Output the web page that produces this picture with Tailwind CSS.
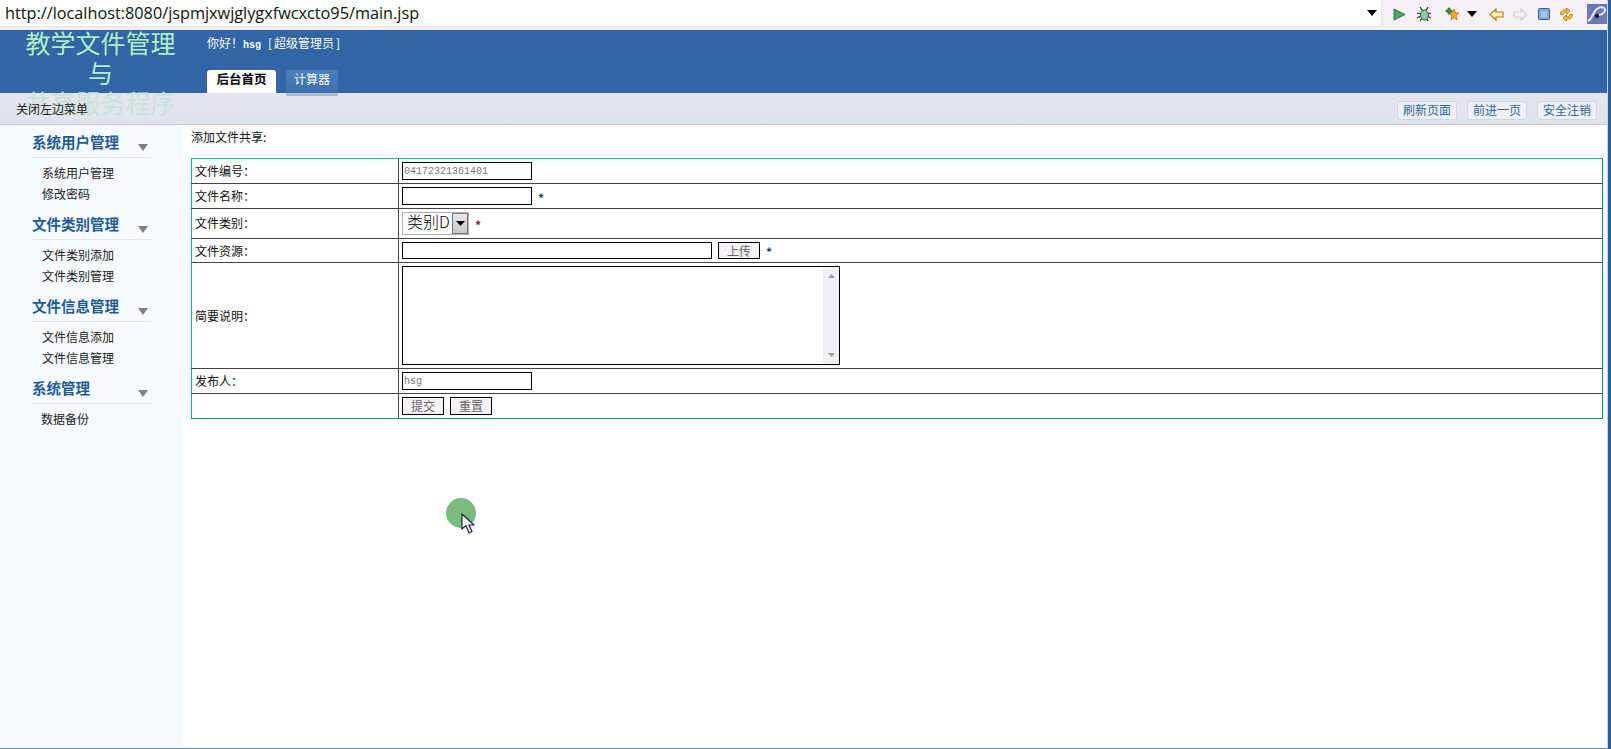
<!DOCTYPE html>
<html>
<head>
    <meta charset="utf-8">
    <title>main.jsp</title>
    <script src="https://cdn.jsdelivr.net/npm/@tailwindcss/browser@4"></script>
</head>
<body class="bg-white">
<div class="relative w-[1611px] h-[749px] overflow-hidden flex font-['Noto_Sans_CJK_SC','Liberation_Sans',sans-serif] text-[12px] text-[#111]">
    <div class="w-[1607px] flex flex-col">

        <!-- browser bar -->
        <div class="h-[30px] bg-[#f5f1f6] flex items-start">
            <div class="w-[1382px] h-[27px] shrink-0 bg-white rounded-br-sm border-r border-b border-[#e4e4e8] pl-[5px] flex items-center relative">
                <span class="font-['Open_Sans',sans-serif] text-[16.25px] text-[#111] mt-[1px]">http://localhost:8080/jspmjxwjglygxfwcxcto95/main.jsp</span>
                <svg class="ml-auto mr-[4px]" width="10" height="6" viewBox="0 0 10 6"><path d="M0 0h10L5 6z" fill="#000"/></svg>
            </div>
            <div class="flex items-center h-[28px] ml-[11px] shrink-0">
                <svg width="13" height="13" viewBox="0 0 13 13"><path d="M1 1l11 5.500L1 12z" fill="#4ea65c" stroke="#2c7a3e"/></svg>
                <svg class="ml-[10px]" width="16" height="16" viewBox="0 0 16 16"><g stroke="#223" stroke-width="1.200"><path d="M4 1l3 4M12 1l-2 4M1 7l4 1M15 7l-4 1M1 12l4-2M15 12l-4-2M4 15l2-3M12 15l-2-3"/></g><ellipse cx="8.500" cy="9" rx="4" ry="5" fill="#9dc49a" stroke="#2f5f48"/></svg>
                <svg class="ml-[12px]" width="16" height="15" viewBox="0 0 16 15"><path d="M10 2l1.500 4H15l-3 2.500L13 13l-3-2.500L7 13l1-4.500L5 6h3.500z" fill="#f5b320" stroke="#d9561a" stroke-width=".8"/><path d="M2 3h2V1h2v2h2v2H6v2H4V5H2z" fill="#3f9a3f" stroke="#1c5f1c" stroke-width=".6"/></svg>
                <svg class="ml-[7px]" width="10" height="6" viewBox="0 0 10 6"><path d="M0 0h10L5 6z" fill="#000"/></svg>
                <svg class="ml-[12px]" width="15" height="13" viewBox="0 0 15 13"><path d="M7 1L1 6.500 7 12V9h7V4H7z" fill="#fdf0c2" stroke="#b9810f" stroke-width="1.200"/></svg>
                <svg class="ml-[9px]" width="15" height="13" viewBox="0 0 15 13"><path d="M8 1l6 5.500L8 12V9H1V4h7z" fill="#f3f3f3" stroke="#cfcfcf" stroke-width="1.200"/></svg>
                <svg class="ml-[10px]" width="12" height="12" viewBox="0 0 12 12"><rect x=".5" y=".5" width="11" height="11" rx="1" fill="#86a9d6" stroke="#2c5b97"/><rect x="3" y="3" width="6" height="6" fill="#a9c3e6"/></svg>
                <svg class="ml-[9px]" width="15" height="15" viewBox="0 0 15 15"><g fill="#f2c14a" stroke="#b47d10" stroke-width=".9"><path d="M1.500 7.500C1.500 4 4 2.500 7.500 3V1l3.500 3-3.500 3V5.200C5.500 5 4.500 6 4 7.800z"/><path d="M13.500 7.500c0 3.500-2.500 5-6 4.500v2L4 11l3.500-3v1.800c2 .2 3-.8 3.500-2.600z"/></g></svg>
                <div class="ml-[13px] w-[20px] h-[20px] bg-[#6a78b4] flex items-center justify-center">
                    <svg width="20" height="20" viewBox="0 0 20 20"><path d="M1 17C4 16 6 10 8 7c2-3 6-5 9-3s-1 7-5 7" fill="none" stroke="#e8eaf4" stroke-width="2"/><circle cx="10" cy="12" r="2" fill="#111"/></svg>
                </div>
            </div>
        </div>

        <!-- top header -->
        <div class="h-[63px] bg-[#3165a5] flex shrink-0">
            <div class="w-[201px] -mt-[3px] text-center text-[25px] leading-[30px] text-[#aef0c4]">
                <p>教学文件管理</p>
                <p>与</p>
                <p>共享服务程序</p>
            </div>
            <div class="ml-[6px] flex flex-col">
                <p class="mt-[4px] text-white leading-[18px]">你好！<span class="font-['Liberation_Mono',monospace] text-[10px] font-bold">hsg</span><span class="ml-[7px]">[</span><span class="mx-[2px]">超级管理员</span>]</p>
                <div class="mt-[15px] flex gap-[10px]">
                    <a class="w-[69px] h-[26px] pb-[8px] bg-white rounded-t-[3px] flex items-center justify-center text-[12.5px] font-bold text-black">后台首页</a>
                    <a class="w-[52px] h-[26px] pb-[8px] bg-gradient-to-b from-[#4a80bd] to-[#3a6da8] rounded-t-[3px] flex items-center justify-center text-white">计算器</a>
                </div>
            </div>
        </div>

        <!-- sub header -->
        <div class="relative h-[32px] shrink-0 bg-gradient-to-b from-[#d8dce5]/70 to-[#d2d9e3]/70 border-b border-[#c4ccd6] flex items-center pl-[16px] pr-[10px]">
            <span class="text-[#222]">关闭左边菜单</span>
            <div class="ml-auto flex gap-[10px] mt-[3px]">
                <a class="w-[60px] h-[19px] bg-[#eef1f6] border border-[#cfd8e4] rounded-[2px] flex items-center justify-center text-[#2f659f]">刷新页面</a>
                <a class="w-[60px] h-[19px] bg-[#eef1f6] border border-[#cfd8e4] rounded-[2px] flex items-center justify-center text-[#2f659f]">前进一页</a>
                <a class="w-[60px] h-[19px] bg-[#eef1f6] border border-[#cfd8e4] rounded-[2px] flex items-center justify-center text-[#2f659f]">安全注销</a>
            </div>
        </div>

        <div class="flex-1 flex border-b border-[#5b8fc4]">
            <!-- left menu -->
            <div class="w-[183px] bg-[#f7faff] shrink-0">
                <div class="ml-[32px] w-[119px] -mt-[1px]">
                    <div class="h-[33px] border-b border-[#dfe6f0] box-content flex items-center justify-between">
                        <span class="text-[14.5px] font-bold text-[#1f5a96] leading-[33px] mt-[2px] whitespace-nowrap">系统用户管理</span>
                        <svg class="mr-[3px] mt-[14px]" width="10" height="7" viewBox="0 0 10 7"><path d="M0 0h10L5 7z" fill="#7c8288"/></svg>
                    </div>
                    <div class="pl-[10px] pt-[4px] pb-[2px] leading-[21px] text-[#222]"><p>系统用户管理</p><p>修改密码</p></div>

                    <div class="h-[33px] border-b border-[#dfe6f0] box-content flex items-center justify-between">
                        <span class="text-[14.5px] font-bold text-[#1f5a96] leading-[33px] mt-[2px] whitespace-nowrap">文件类别管理</span>
                        <svg class="mr-[3px] mt-[14px]" width="10" height="7" viewBox="0 0 10 7"><path d="M0 0h10L5 7z" fill="#7c8288"/></svg>
                    </div>
                    <div class="pl-[10px] pt-[4px] pb-[2px] leading-[21px] text-[#222]"><p>文件类别添加</p><p>文件类别管理</p></div>

                    <div class="h-[33px] border-b border-[#dfe6f0] box-content flex items-center justify-between">
                        <span class="text-[14.5px] font-bold text-[#1f5a96] leading-[33px] mt-[2px] whitespace-nowrap">文件信息管理</span>
                        <svg class="mr-[3px] mt-[14px]" width="10" height="7" viewBox="0 0 10 7"><path d="M0 0h10L5 7z" fill="#7c8288"/></svg>
                    </div>
                    <div class="pl-[10px] pt-[4px] pb-[2px] leading-[21px] text-[#222]"><p>文件信息添加</p><p>文件信息管理</p></div>

                    <div class="h-[33px] border-b border-[#dfe6f0] box-content flex items-center justify-between">
                        <span class="text-[14.5px] font-bold text-[#1f5a96] leading-[33px] mt-[2px] whitespace-nowrap">系统管理</span>
                        <svg class="mr-[3px] mt-[14px]" width="10" height="7" viewBox="0 0 10 7"><path d="M0 0h10L5 7z" fill="#7c8288"/></svg>
                    </div>
                    <div class="pl-[9px] pt-[4px] pb-[2px] leading-[21px] text-[#222]"><p>数据备份</p></div>
                </div>
            </div>

            <!-- main form -->
            <div class="flex-1 pl-[8px] pr-[4px]">
                <p class="h-[33px] leading-[24px] text-[#111]">添加文件共享:</p>
                <table class="w-[1412px] border-collapse table-fixed">
                    <colgroup><col class="w-[207px]"><col></colgroup>
                    <tr class="h-[25px]">
                        <td class="border border-[#444] border-l-[#14aaaa] border-t-[#14b8b8] pl-[3px] py-0 pb-[1px]">文件编号：</td>
                        <td class="border border-[#444] border-r-[#0c8f8f] border-t-[#14b8b8] pl-[3px] py-0"><input class="block w-[130px] h-[18px] border border-black px-[1px] font-['Liberation_Mono',monospace] text-[10px] text-[#777]" value="04172321361401" readonly></td>
                    </tr>
                    <tr class="h-[25px]">
                        <td class="border border-[#444] border-l-[#14aaaa] pl-[3px] py-0 pb-[1px]">文件名称：</td>
                        <td class="border border-[#444] border-r-[#0c8f8f] pl-[3px] py-0"><div class="flex items-center"><input class="block w-[130px] h-[18px] border border-black"><span class="ml-[6px] text-[#1c3f6e] font-bold mt-[3px]">*</span></div></td>
                    </tr>
                    <tr class="h-[30px]">
                        <td class="border border-[#444] border-l-[#14aaaa] pl-[3px] py-0 pb-[1px]">文件类别：</td>
                        <td class="border border-[#444] border-r-[#0c8f8f] pl-[3px] py-0"><div class="flex items-center">
                            <div class="w-[67px] h-[23px] -mt-[1px] border border-[#aeb0b6] flex items-center justify-between pl-[4px] text-[16px] font-light text-black">
                                <span class="-mt-[4px] whitespace-nowrap">类别D</span>
                                <span class="w-[16px] h-[21px] bg-gradient-to-b from-[#e8e8e8] to-[#c8c8c8] border border-[#777] flex items-center justify-center shrink-0"><svg width="9" height="5" viewBox="0 0 9 5"><path d="M0 0h9L4.500 5z" fill="#000"/></svg></span>
                            </div>
                            <span class="ml-[6px] text-[#7a1f2a] font-bold mt-[3px]">*</span>
                        </div></td>
                    </tr>
                    <tr class="h-[24px]">
                        <td class="border border-[#444] border-l-[#14aaaa] pl-[3px] py-0">文件资源：</td>
                        <td class="border border-[#444] border-r-[#0c8f8f] pl-[3px] py-0"><div class="flex items-center">
                            <input class="block w-[310px] h-[17px] border border-black">
                            <button class="ml-[6px] w-[42px] h-[17px] bg-[#f5f1f6] border border-black text-[#666] leading-none">上传</button>
                            <span class="ml-[6px] text-[#1c3f6e] font-bold mt-[3px]">*</span>
                        </div></td>
                    </tr>
                    <tr class="h-[106px]">
                        <td class="border border-[#444] border-l-[#14aaaa] pl-[3px] py-0">简要说明：</td>
                        <td class="border border-[#444] border-r-[#0c8f8f] pl-[3px] py-0">
                            <div class="w-[438px] h-[99px] border border-black flex justify-end">
                                <div class="w-[16px] h-full bg-[#f2f0f4] flex flex-col items-center justify-between py-[7px]">
                                    <svg width="7" height="4" viewBox="0 0 7 4"><path d="M0 4h7L3.500 0z" fill="#9a9a9a"/></svg>
                                    <svg width="7" height="4" viewBox="0 0 7 4"><path d="M0 0h7L3.500 4z" fill="#9a9a9a"/></svg>
                                </div>
                            </div>
                        </td>
                    </tr>
                    <tr class="h-[25px]">
                        <td class="border border-[#444] border-l-[#14aaaa] pl-[3px] py-0">发布人：</td>
                        <td class="border border-[#444] border-r-[#0c8f8f] pl-[3px] py-0"><input class="block w-[130px] h-[18px] border border-black px-[1px] font-['Liberation_Mono',monospace] text-[10px] text-[#777]" value="hsg" readonly></td>
                    </tr>
                    <tr class="h-[25px]">
                        <td class="border border-[#444] border-l-[#14aaaa] border-b-[#0a8a8a] py-0"></td>
                        <td class="border border-[#444] border-r-[#0c8f8f] border-b-[#0a8a8a] pl-[3px] py-0"><div class="flex gap-[6px]">
                            <button class="w-[42px] h-[18px] bg-[#f5f1f6] border border-black text-[#666] leading-none">提交</button>
                            <button class="w-[42px] h-[18px] bg-[#f5f1f6] border border-black text-[#666] leading-none">重置</button>
                        </div></td>
                    </tr>
                </table>
            </div>
        </div>
    </div>

    <!-- window edge -->
    <div class="w-[4px] border-l border-[#c9d3e2] bg-[#2a5f9e]"></div>

    <!-- recorder cursor -->
    <div class="absolute left-[446px] top-[498px] w-[30px] h-[30px] rounded-full bg-[#7cbb7e]"></div>
    <svg class="absolute left-[461px] top-[513px]" width="14" height="21" viewBox="0 0 14 21"><path d="M1 1v15l4-3.500L8 20l3-1.500-3-6.500h5z" fill="#fff" stroke="#1c2440" stroke-width="1.200"/></svg>
</div>
</body>
</html>
